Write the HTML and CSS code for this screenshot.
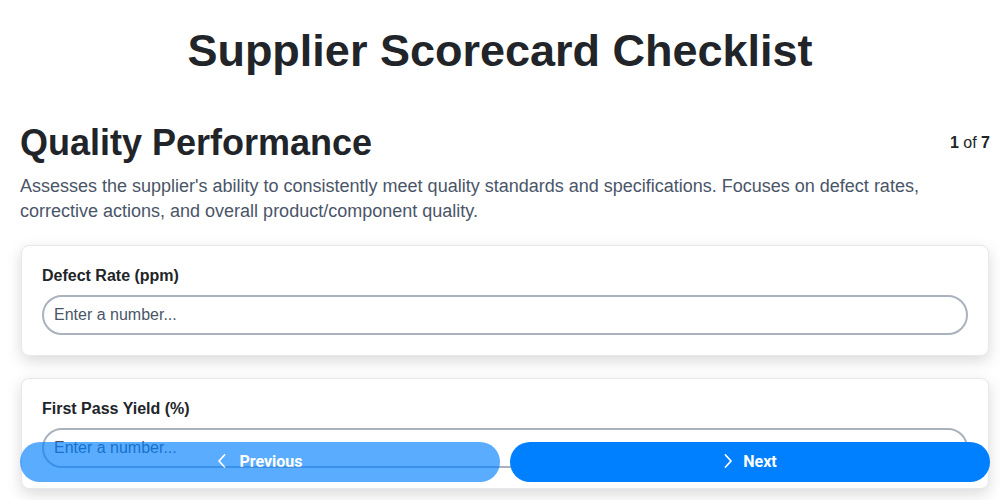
FILE: index.html
```html
<!DOCTYPE html>
<html lang="en">
<head>
<meta charset="utf-8">
<title>Supplier Scorecard Checklist</title>
<link rel="stylesheet" href="styles.css">
</head>
<body>
<h1 class="page-title">Supplier Scorecard Checklist</h1>
<main class="content">
  <div class="section-head">
    <h2 class="section-title">Quality Performance</h2>
    <div class="step"><b>1</b> of <b>7</b></div>
  </div>
  <p class="section-desc">Assesses the supplier's ability to consistently meet quality standards and specifications. Focuses on defect rates, corrective actions, and overall product/component quality.</p>
  <div class="card">
    <label class="field-label" for="f1">Defect Rate (ppm)</label>
    <input class="field-input" id="f1" type="number" placeholder="Enter a number...">
  </div>
  <div class="card">
    <label class="field-label" for="f2">First Pass Yield (%)</label>
    <input class="field-input" id="f2" type="number" placeholder="Enter a number...">
  </div>
</main>
<nav class="nav-bar">
  <button class="nav-btn prev" disabled>
    <svg class="chev" width="10" height="16" viewBox="0 0 10 16"><path d="M7.5 2 L2 8 L7.5 14" fill="none" stroke="currentColor" stroke-width="1.8" stroke-linecap="round" stroke-linejoin="round"/></svg>
    <span>Previous</span>
  </button>
  <button class="nav-btn next">
    <svg class="chev" width="10" height="16" viewBox="0 0 10 16"><path d="M2.5 2 L8 8 L2.5 14" fill="none" stroke="currentColor" stroke-width="1.8" stroke-linecap="round" stroke-linejoin="round"/></svg>
    <span>Next</span>
  </button>
</nav>
</body>
</html>
```

FILE: styles.css
```css
* { box-sizing: border-box; }
html, body { margin: 0; padding: 0; background: #ffffff; }
body {
  font-family: "Liberation Sans", Arial, sans-serif;
  color: #212529;
  height: 500px;
  overflow: hidden;
}
.page-title {
  margin: 0;
  padding-top: 25px;
  text-align: center;
  font-size: 45px;
  line-height: 52px;
  font-weight: 700;
  color: #212529;
}
.content {
  padding: 0 10px 0 20px;
  margin-top: 45px;
}
.section-head {
  display: flex;
  justify-content: space-between;
  align-items: center;
}
.section-title {
  margin: 0;
  font-size: 36px;
  line-height: 41px;
  font-weight: 700;
  color: #212529;
}
.step {
  font-size: 16px;
  color: #212529;
}
.section-desc {
  margin: 11px 0 21px;
  font-size: 18px;
  line-height: 25px;
  color: #4a5568;
}
.card {
  background: #fff;
  border: 1px solid #e6e8ec;
  border-radius: 8px;
  box-shadow: 0 5px 15px rgba(0, 0, 0, 0.15);
  padding: 20px;
  margin: 0 1px 22px;
  display: flex;
  flex-direction: column;
}
.field-label {
  font-size: 16px;
  line-height: 19px;
  font-weight: 700;
  color: #212529;
  margin-bottom: 10px;
}
.field-input {
  height: 40px;
  border: 2px solid #aab2bd;
  border-radius: 20px;
  padding: 0 10px;
  font-family: "Liberation Sans", Arial, sans-serif;
  font-size: 16px;
  color: #212529;
  background: #fff;
  outline: none;
}
.field-input::placeholder { color: #4a5568; }
.nav-bar {
  position: fixed;
  left: 20px;
  right: 10px;
  bottom: 18px;
  display: flex;
  gap: 10px;
}
.nav-btn {
  flex: 1;
  height: 40px;
  padding: 0 0 2px;
  border: none;
  border-radius: 20px;
  background: #0080ff;
  color: #fff;
  font-family: Roboto, "Liberation Sans", sans-serif;
  font-size: 16px;
  font-weight: 700;
  display: flex;
  align-items: center;
  justify-content: center;
  gap: 10px;
  cursor: pointer;
}
.nav-btn.prev { opacity: 0.65; cursor: default; gap: 12px; }
.chev { display: block; }
```
